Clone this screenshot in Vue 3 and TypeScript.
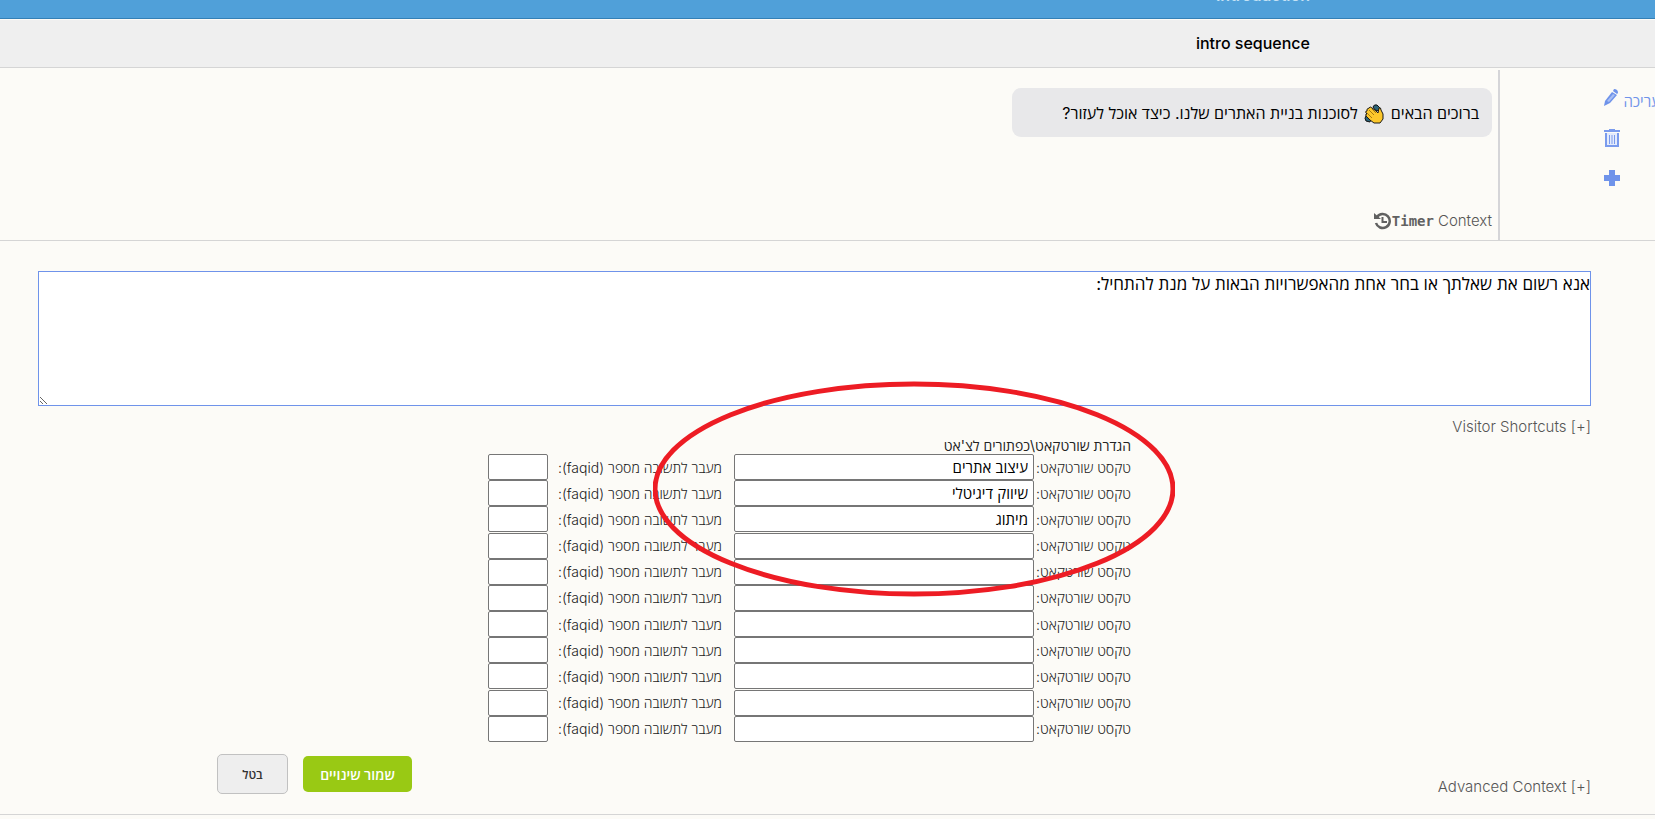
<script setup lang="ts">
import { ref } from 'vue'

interface Shortcut {
  text: string
  faqId: string
}

const message = ref('אנא רשום את שאלתך או בחר אחת מהאפשרויות הבאות על מנת להתחיל:')
const initial = ['עיצוב אתרים', 'שיווק דיגיטלי', 'מיתוג']
const shortcuts = ref<Shortcut[]>(
  Array.from({ length: 11 }, (_, i) => ({ text: initial[i] ?? '', faqId: '' })),
)
</script>

<template>
  <main class="page" dir="rtl">
    <header class="topbar"><span>Introduction</span></header>
    <h1 class="sequence">intro sequence</h1>

    <section class="entry">
      <nav class="actions">
        <a class="action" href="#" aria-label="עריכה">
          <span class="edit-label">עריכה</span>
          <svg width="16" height="20" viewBox="0 0 16 20">
            <path d="M1 18 2 13 9 4 14 7 7 15Z" fill="#6f93ea" />
            <path d="M4 13 10 6 12 7 6 14Z" fill="#a9c0f5" />
            <path d="M10 3 11 1Q15 1 15 5L14 6Z" fill="#6f93ea" />
          </svg>
        </a>
        <a class="action" href="#" aria-label="מחיקה">
          <svg width="16" height="20" viewBox="0 0 16 20">
            <path d="M5 1h6v1h5v2H0V2h5z" fill="#7a9bed" />
            <path d="M2 5v13h12V5" fill="#e4ebfc" stroke="#7a9bed" stroke-width="2" />
            <path d="M5.500 7v9M8 7v9M10.500 7v9" stroke="#7a9bed" />
          </svg>
        </a>
        <a class="action" href="#" aria-label="הוספה">
          <svg width="16" height="16" viewBox="0 0 16 16">
            <path d="M5 0h6v5h5v6h-5v5H5v-5H0V5h5z" fill="#6f93ea" />
          </svg>
        </a>
      </nav>
      <div class="content">
        <p class="bubble">
          ברוכים הבאים
          <svg class="clap" width="20" height="20" viewBox="0 0 20 20" role="img" aria-label="👏">
            <path d="M9 3Q10 0 13 1L16 4 15 7 11 6ZM2 12Q0 14 2 17L6 18 7 15Z" fill="#2c6478" stroke="#111" />
            <path d="M2 9Q1 7 3 7 2 5 5 4 6 2 8 4L12 7 14 9 15 4Q17 3 17 6L19 10V15L16 19H10L6 16 2 12Q1 10 3 10Z" fill="#fcc72b" stroke="#1b1b1b" />
            <path d="M5 6 10 11M3 9 8 14M8 5 12 9" stroke="#a67a12" fill="none" />
          </svg>
          לסוכנות בניית האתרים שלנו. כיצד אוכל לעזור?
        </p>
        <div class="meta" dir="ltr">
          <svg width="18" height="18" viewBox="0 0 18 18" fill="none" stroke="#616161">
            <path d="M3 5A7 7 0 1 1 2 11" stroke-width="2.500" />
            <path d="M0 1v6h7z" fill="#616161" stroke="none" />
            <path d="M8.500 5v5H13" stroke-width="2" />
          </svg>
          <b>Timer</b>
          <a href="#">Context</a>
        </div>
      </div>
    </section>

    <form class="editor" @submit.prevent>
      <textarea v-model="message" class="message" aria-label="הודעה"></textarea>
      <a class="toggle" href="#" dir="ltr">Visitor Shortcuts [+]</a>
      <div class="shortcuts">
        <div class="table-wrap">
          <p class="title">הגדרת שורטקאט\כפתורים לצ'אט</p>
          <table>
            <tbody>
              <tr v-for="(item, i) in shortcuts" :key="i">
                <td class="text-label"><label :for="`text-${i}`">טקסט שורטקאט:</label></td>
                <td class="text-cell"><input :id="`text-${i}`" v-model="item.text" type="text" /></td>
                <td class="faq-label"><label :for="`faq-${i}`">מעבר לתשובה מספר (faqid):</label></td>
                <td class="faq-cell"><input :id="`faq-${i}`" v-model="item.faqId" type="text" /></td>
              </tr>
            </tbody>
          </table>
          <svg class="marker" viewBox="0 0 522 216" aria-hidden="true">
            <ellipse cx="261" cy="108" rx="259" ry="105" fill="none" stroke="#ed1c24" stroke-width="5" />
          </svg>
        </div>
      </div>
      <footer class="footer">
        <a class="toggle" href="#" dir="ltr">Advanced Context [+]</a>
        <div class="buttons">
          <button class="save" type="submit">שמור שינויים</button>
          <button class="cancel" type="button">בטל</button>
        </div>
      </footer>
    </form>
  </main>
</template>

<style>
body {
  background: #fcfbf7;
}
</style>

<style scoped>
* {
  box-sizing: border-box;
}
.page {
  font-family: Inter, "Open Sans", "Noto Sans", sans-serif;
  font-size: 14px;
  color: #222;
  overflow: hidden;
}
.topbar {
  height: 19px;
  padding-right: 345px;
  background: #50a0d9;
  border-bottom: 1px solid #3480b6;
  color: #c5e2f5;
  overflow: hidden;
  display: flex;
  align-items: flex-end;
}
.topbar span {
  font-size: 16px;
  font-weight: 600;
  line-height: 20px;
  margin-bottom: 13px;
}
.sequence {
  margin: 1px 0 2px;
  height: 48px;
  padding-right: 345px;
  background: #efefef;
  border-bottom: 1px solid #d5d5d5;
  color: #000;
  font-size: 16px;
  font-weight: 500;
  line-height: 46px;
}
.entry {
  display: flex;
  height: 171px;
  border-bottom: 1px solid #d5d5d5;
}
.actions {
  width: 155px;
  flex: none;
  padding: 18px 35px 0 0;
  display: flex;
  flex-direction: column;
  gap: 20px;
  align-items: flex-start;
}
.action {
  display: flex;
  gap: 4px;
  height: 20px;
  align-items: center;
  color: #6f93ea;
  text-decoration: none;
  font-size: 15px;
}
.action svg {
  flex: none;
}
.edit-label {
  margin-right: -40px;
  padding-top: 6px;
}
.content {
  flex: 1;
  border-right: 2px solid #d5d5d8;
  padding: 18px 6px 9px 0;
  display: flex;
  flex-direction: column;
  justify-content: space-between;
  align-items: flex-start;
}
.bubble {
  margin: 0;
  width: 480px;
  height: 49px;
  padding: 0 13px;
  border-radius: 9px;
  background: #e8e8ea;
  color: #000;
  font-size: 16px;
  line-height: 50px;
  white-space: nowrap;
}
.clap {
  vertical-align: middle;
  margin: 0 2px 2px;
}
.meta {
  display: flex;
  align-items: center;
  color: #616161;
  font-size: 15px;
  line-height: 20px;
}
.meta b {
  font-family: "DejaVu Sans Mono", monospace;
  font-size: 14px;
  margin-right: 4px;
}
.meta a,
.toggle {
  color: #555;
  font-weight: 300;
  text-decoration: none;
}
.editor {
  padding: 30px 64px 20px 38px;
  border-bottom: 1px solid #d5d5d5;
}
.message {
  display: block;
  width: 100%;
  height: 135px;
  margin: 0;
  padding: 2px 0;
  border: 1px solid #6f93ea;
  background: #fff;
  color: #000;
  font: inherit;
  font-size: 17px;
  line-height: 20px;
  outline: 0;
  resize: both;
}
.toggle {
  display: block;
  width: fit-content;
  font-size: 15px;
  line-height: 20px;
}
.message + .toggle {
  margin-top: 11px;
}
.shortcuts {
  display: flex;
  justify-content: center;
  padding-right: 10px;
}
.table-wrap {
  position: relative;
}
.title {
  margin: 0;
  line-height: 17px;
}
table {
  height: 288px;
  width: 643px;
  border-collapse: collapse;
  table-layout: fixed;
}
td {
  padding: 0;
  white-space: nowrap;
}
.text-label {
  width: 97px;
}
.text-cell {
  width: 300px;
}
.faq-cell {
  width: 60px;
}
.faq-label {
  padding-right: 12px;
}
td label {
  font-weight: 300;
}
td input {
  display: block;
  width: 100%;
  height: 26px;
  border: 1px solid #767676;
  border-radius: 2px;
  padding: 0 5px;
  background: #fff;
  color: #000;
  font: inherit;
  font-size: 15px;
}
.marker {
  position: absolute;
  right: -44px;
  top: -56px;
  width: 522px;
  height: 216px;
  pointer-events: none;
}
.footer {
  display: flex;
  justify-content: space-between;
  align-items: flex-end;
  padding-left: 179px;
  margin-top: 12px;
}
.footer .toggle {
  margin-bottom: -3px;
}
.buttons {
  display: flex;
  align-items: center;
  gap: 15px;
}
.buttons button {
  font: inherit;
  font-weight: 600;
  border-radius: 5px;
}
.save {
  width: 109px;
  height: 36px;
  padding: 0;
  border: 0;
  background: #99c914;
  color: #fff;
}
.buttons .cancel {
  width: 71px;
  height: 40px;
  border: 1px solid #c1c1c1;
  background: #eee;
  color: #333;
  font-size: 12px;
}
</style>
